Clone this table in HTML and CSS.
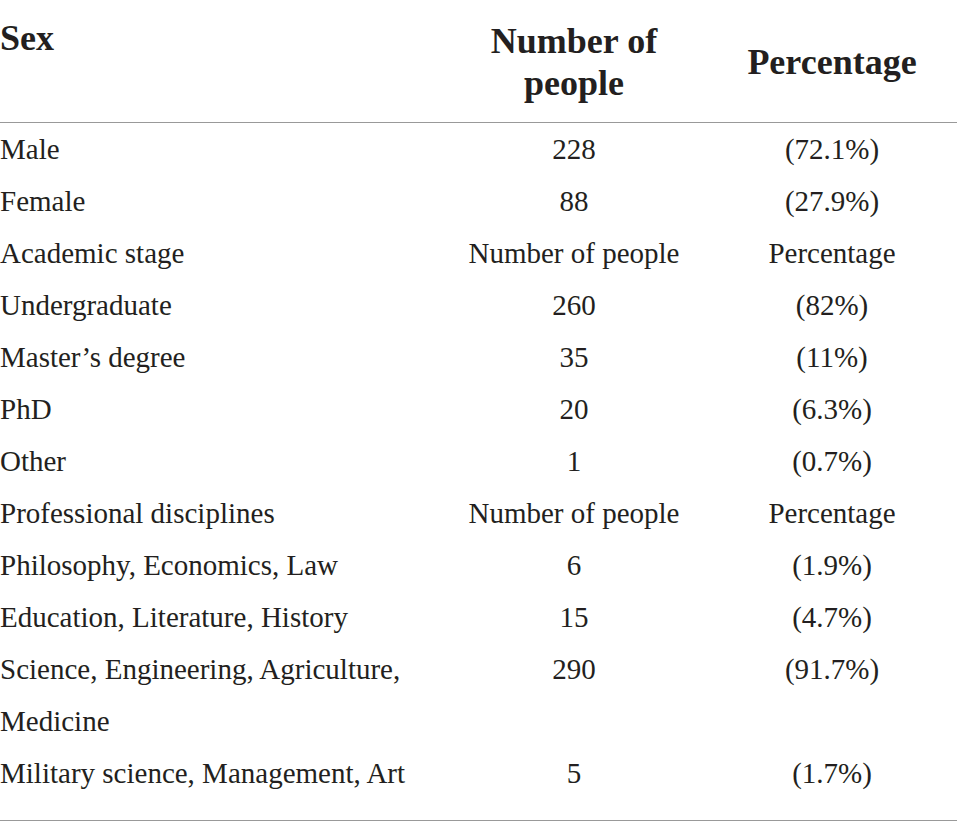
FILE: index.html
```html
<!DOCTYPE html>
<html lang="en">
<head>
    <meta charset="UTF-8">
    <meta name="viewport" content="width=device-width, initial-scale=1.0">
    <title>Participant characteristics</title>
    <link rel="stylesheet" href="styles.css">
</head>
<body>
    <table class="stats-table">
        <colgroup>
            <col class="col-label">
            <col class="col-count">
            <col class="col-percent">
        </colgroup>
        <thead>
            <tr>
                <th class="label-head">Sex</th>
                <th>Number of<br>people</th>
                <th>Percentage</th>
            </tr>
        </thead>
        <tbody>
            <tr><td>Male</td><td>228</td><td>(72.1%)</td></tr>
            <tr><td>Female</td><td>88</td><td>(27.9%)</td></tr>
            <tr><td>Academic stage</td><td>Number of people</td><td>Percentage</td></tr>
            <tr><td>Undergraduate</td><td>260</td><td>(82%)</td></tr>
            <tr><td>Master’s degree</td><td>35</td><td>(11%)</td></tr>
            <tr><td>PhD</td><td>20</td><td>(6.3%)</td></tr>
            <tr><td>Other</td><td>1</td><td>(0.7%)</td></tr>
            <tr><td>Professional disciplines</td><td>Number of people</td><td>Percentage</td></tr>
            <tr><td>Philosophy, Economics, Law</td><td>6</td><td>(1.9%)</td></tr>
            <tr><td>Education, Literature, History</td><td>15</td><td>(4.7%)</td></tr>
            <tr><td>Science, Engineering, Agriculture, Medicine</td><td>290</td><td>(91.7%)</td></tr>
            <tr class="last-row"><td>Military science, Management, Art</td><td>5</td><td>(1.7%)</td></tr>
        </tbody>
    </table>
</body>
</html>
```

FILE: styles.css
```css
body {
    margin: 0;
    padding: 0;
    background-color: #fff;
    color: #231f20;
    font-family: "Liberation Serif", "Times New Roman", serif;
}

.stats-table {
    width: 957px;
    border-collapse: collapse;
    table-layout: fixed;
}

.col-label {
    width: 441px;
}

.col-count {
    width: 266px;
}

.col-percent {
    width: 250px;
}

.stats-table th {
    font-size: 36px;
    font-weight: bold;
    line-height: 42px;
    text-align: center;
    vertical-align: middle;
    padding: 20px 0 18px;
    border-bottom: 1px solid #999;
}

.stats-table th.label-head {
    text-align: left;
    vertical-align: top;
    padding-top: 17px;
}

.stats-table td {
    font-size: 29px;
    line-height: 52px;
    padding: 0;
    text-align: center;
    vertical-align: top;
}

.stats-table td:first-child {
    text-align: left;
}

.stats-table .last-row td {
    padding-bottom: 21px;
    border-bottom: 1px solid #999;
}
```
